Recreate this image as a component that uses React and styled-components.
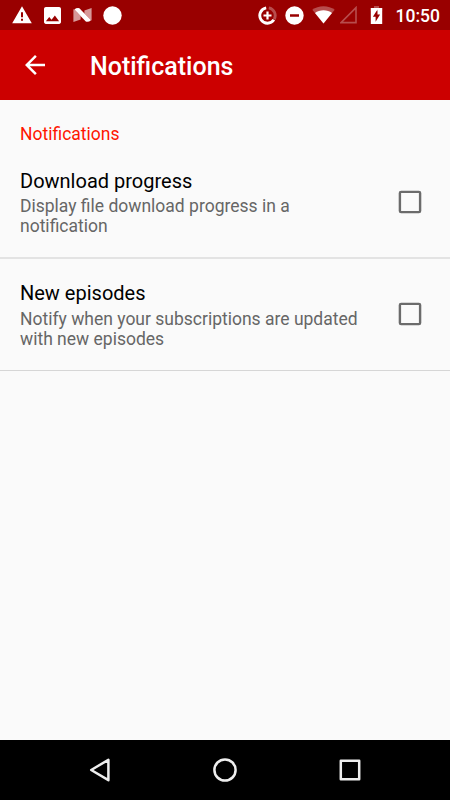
import React from "react";
import styled, { createGlobalStyle } from "styled-components";

const preferences = [
  {
    id: "progress",
    title: "Download progress",
    summary: "Display file download progress in a notification",
  },
  {
    id: "episodes",
    title: "New episodes",
    summary: "Notify when your subscriptions are updated with new episodes",
  },
];

const WarningIcon = () => (
  <svg width="20" height="18" viewBox="0 0 20 18">
    <path fill="#fff" fillRule="evenodd" d="M10 0.2L19.8 17.2H0.2zM9 6.2v5h2V6.2zM9 12.7v2h2v-2z" />
  </svg>
);

const ImageIcon = () => (
  <svg width="17" height="17" viewBox="3 3 18 18">
    <path
      fill="#fff"
      d="M21 19V5c0-1.1-.9-2-2-2H5c-1.1 0-2 .9-2 2v14c0 1.1.9 2 2 2h14c1.1 0 2-.9 2-2zM8.5 13.5l2.5 3.01L14.5 12l4.5 6H5l3.5-4.5z"
    />
  </svg>
);

const NougatIcon = () => (
  <svg width="19" height="16" viewBox="0 0 19 16">
    <path fill="#fff" opacity="0.6" d="M0.4 2.2L1.6 2.8L7.6 9V12.6L0.4 15zM18.6 1V13.4L17.6 13L11.4 6.6V3.6z" />
    <path fill="#fff" d="M1.4 2.4Q3.6 0.6 6.4 1.2L18 13.2Q15.6 15.4 12.8 14.6z" />
  </svg>
);

const DotIcon = () => (
  <svg width="19" height="19" viewBox="0 0 19 19">
    <circle cx="9.5" cy="9.5" r="9.2" fill="#fff" />
  </svg>
);

const DataSaverIcon = () => (
  <svg width="19" height="19" viewBox="0 0 19 19" fill="none" stroke="#fff">
    <path strokeWidth="2.9" opacity="0.3" d="M10.8 1.9A7.7 7.7 0 0 1 16.2 13.2" />
    <path strokeWidth="2.9" d="M8.2 1.9A7.7 7.7 0 1 0 15.9 13.8" />
    <path strokeWidth="2.2" d="M9.5 5.5v8M5.5 9.5h8" />
  </svg>
);

const DoNotDisturbIcon = () => (
  <svg width="19" height="19" viewBox="0 0 19 19">
    <path
      fill="#fff"
      fillRule="evenodd"
      d="M9.5 0.3a9.2 9.2 0 1 0 0 18.4a9.2 9.2 0 1 0 0-18.4zM5 8.2h9v2.6H5z"
    />
  </svg>
);

const WifiIcon = () => (
  <svg width="23" height="18" viewBox="0 0 23 18" fill="#fff">
    <path opacity="0.3" d="M11.5 17.6L0.3 3.7C3.4 1.4 7.2 0.2 11.5 0.2S19.6 1.4 22.7 3.7z" />
    <path d="M11.5 17.6L3 7C5.3 5.2 8.2 4.2 11.5 4.2S17.7 5.2 20 7z" />
  </svg>
);

const SignalIcon = () => (
  <svg width="18" height="18" viewBox="0 0 18 18">
    <path fill="none" stroke="#fff" strokeWidth="1.6" opacity="0.3" d="M16 1.6V16.6H1z" />
  </svg>
);

const BatteryIcon = () => (
  <svg width="13" height="18" viewBox="0 0 13 18">
    <path fill="#fff" opacity="0.3" d="M4 0h5v2h3.2v3H0.8V2H4z" />
    <path fill="#fff" fillRule="evenodd" d="M0.8 2h11.4v16H0.8zM7.5 3.4L2.9 10.8h2.7v5L10.1 8.6H7.5z" />
  </svg>
);

const BackArrowIcon = () => (
  <svg width="30" height="30" viewBox="0 0 24 24">
    <path fill="#fff" d="M20 11H7.83l5.59-5.59L12 4l-8 8 8 8 1.41-1.41L7.83 13H20v-2z" />
  </svg>
);

const CheckboxIcon = () => (
  <svg width="24" height="24" viewBox="0 0 24 24">
    <rect x="1.9" y="1.9" width="20.2" height="20.2" rx="1.2" fill="none" stroke="#6b6b6b" strokeWidth="2.4" />
  </svg>
);

const App = () => (
  <>
    <GlobalStyle />
    <Screen>
      <StatusBar>
        <IconGroup $gap={11.7}>
          <WarningIcon />
          <ImageIcon />
          <NougatIcon />
          <DotIcon />
        </IconGroup>
        <IconGroup $gap={8}>
          <DataSaverIcon />
          <DoNotDisturbIcon />
          <SignalGroup>
            <WifiIcon />
            <SignalIcon />
          </SignalGroup>
          <BatterySlot>
            <BatteryIcon />
          </BatterySlot>
          <Clock>10:50</Clock>
        </IconGroup>
      </StatusBar>
      <AppBar>
        <BackButton type="button" aria-label="Back">
          <BackArrowIcon />
        </BackButton>
        <AppBarTitle>Notifications</AppBarTitle>
      </AppBar>
      <Content>
        <Category>Notifications</Category>
        {preferences.map(({ id, title, summary }, index) => (
          <Preference key={id} $first={index === 0}>
            <PreferenceText $first={index === 0}>
              <PreferenceTitle>{title}</PreferenceTitle>
              <PreferenceSummary>{summary}</PreferenceSummary>
            </PreferenceText>
            <Checkbox type="button" role="checkbox" aria-checked="false" aria-label={title}>
              <CheckboxIcon />
            </Checkbox>
          </Preference>
        ))}
      </Content>
      <NavigationBar>
        <NavButton type="button" aria-label="Navigate back">
          <svg width="30" height="30" viewBox="0 0 30 30">
            <path d="M23.4 4.8V25.2L6.2 15z" />
          </svg>
        </NavButton>
        <NavButton type="button" aria-label="Home">
          <svg width="30" height="30" viewBox="0 0 30 30">
            <circle cx="15" cy="15" r="10.6" />
          </svg>
        </NavButton>
        <NavButton type="button" aria-label="Recent apps">
          <svg width="30" height="30" viewBox="0 0 30 30">
            <rect x="5.8" y="5.8" width="18.4" height="18.4" />
          </svg>
        </NavButton>
      </NavigationBar>
    </Screen>
  </>
);

export default App;

const GlobalStyle = createGlobalStyle`
  * {
    box-sizing: border-box;
  }
  body {
    margin: 0;
    font-family: Roboto, "Liberation Sans", sans-serif;
  }
  svg {
    display: block;
    flex-shrink: 0;
  }
`

const Screen = styled.div`
  display: flex;
  flex-direction: column;
  width: 450px;
  height: 800px;
  overflow: hidden;
  background-color: #fafafa;
`

const StatusBar = styled.div`
  display: flex;
  justify-content: space-between;
  height: 30px;
  padding: 0 10px 0 12.3px;
  background-color: #990000;
`

const IconGroup = styled.div`
  display: flex;
  align-items: center;
  gap: ${({ $gap }) => $gap}px;
`

const SignalGroup = styled.div`
  display: flex;
  gap: 5px;
`

const BatterySlot = styled.div`
  padding: 0 5px 0 4px;
`

const Clock = styled.span`
  padding-top: 1px;
  font-size: 17.5px;
  font-weight: 500;
  line-height: 30px;
  color: #fff;
`

const AppBar = styled.header`
  display: flex;
  align-items: center;
  gap: 40px;
  height: 70px;
  padding: 0 20px;
  background-color: #cc0000;
`

const BackButton = styled.button`
  padding: 0;
  border: none;
  background: none;
  cursor: pointer;
`

const AppBarTitle = styled.h1`
  margin: 0;
  padding-top: 3px;
  font-size: 25px;
  font-weight: 500;
  line-height: 30px;
  color: #fff;
`

const Content = styled.main`
  flex: 1;
`

const Category = styled.h2`
  margin: 0;
  padding: 24px 20px 2px;
  font-size: 17.5px;
  font-weight: 400;
  line-height: 20px;
  color: #ff1500;
`

const Preference = styled.label`
  display: flex;
  align-items: center;
  justify-content: space-between;
  height: ${({ $first }) => ($first ? 113 : 112)}px;
  padding: 0 28px ${({ $first }) => ($first ? 0 : 1)}px 20px;
  border-bottom: ${({ $first }) => ($first ? "2px solid #e3e3e3" : "1px solid #d6d6d6")};
`

const PreferenceText = styled.div`
  align-self: flex-start;
  width: 348px;
  padding-top: ${({ $first }) => ($first ? 22.5 : 22.25)}px;
`

const PreferenceTitle = styled.div`
  font-size: 20px;
  line-height: 24px;
  color: #000;
`

const PreferenceSummary = styled.div`
  margin-top: 3.25px;
  font-size: 17.5px;
  line-height: 20.5px;
  color: #666;
`

const Checkbox = styled.button`
  padding: 0;
  border: none;
  background: none;
  cursor: pointer;
`

const NavigationBar = styled.nav`
  display: flex;
  justify-content: center;
  align-items: center;
  gap: 95px;
  height: 60px;
  background-color: #000;
`

const NavButton = styled.button`
  padding: 0;
  border: none;
  background: none;
  cursor: pointer;

  svg {
    fill: none;
    stroke: #eee;
    stroke-width: 2.5px;
    stroke-linejoin: round;
  }
`
